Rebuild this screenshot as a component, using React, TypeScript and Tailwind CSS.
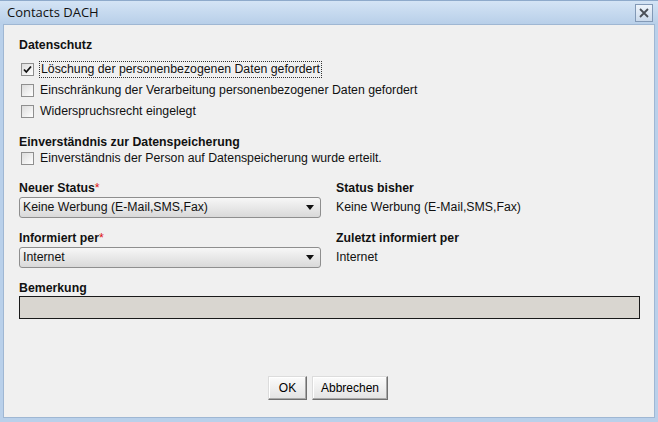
import React from "react";

const sans = { fontFamily: '"Liberation Sans", Arial, sans-serif' };

function CheckBox({ checked = false }: { checked?: boolean }) {
  return (
    <span className="grid h-[13px] w-[13px] shrink-0 place-items-center border border-[#8f8f8f] bg-gradient-to-br from-[#dcdcdc] to-[#ffffff]">
      {checked && (
        <svg width="9" height="9" viewBox="0 0 9 9">
          <path d="M1 4.5 L3.3 7 L8 1.5" fill="none" stroke="#111" strokeWidth="1.8" />
        </svg>
      )}
    </span>
  );
}

function CheckRow({ label, checked, focused }: { label: string; checked?: boolean; focused?: boolean }) {
  return (
    <div className="flex h-[21px] items-center pl-[2px]">
      <CheckBox checked={checked} />
      <span
        className={
          focused
            ? "ml-[5px] border border-dotted border-[#333] px-[1px] leading-[15px]"
            : "ml-[6px] leading-[15px]"
        }
      >
        {label}
      </span>
    </div>
  );
}

function Select({ value }: { value: string }) {
  return (
    <div className="flex h-[21px] w-[302px] items-center justify-between rounded-[3px] border border-[#8e8e8e] bg-gradient-to-b from-[#f7f7f7] to-[#d9d9d9] pl-[3px] pr-[6px]">
      <span>{value}</span>
      <svg width="8" height="5" viewBox="0 0 8 5">
        <path d="M0 0 H8 L4 5 Z" fill="#111" />
      </svg>
    </div>
  );
}

function Button({ children, w }: { children: React.ReactNode; w: string }) {
  return (
    <button
      className={`h-[24px] ${w} border border-t-[#dcdcdc] border-l-[#dcdcdc] border-r-[#6f6f6f] border-b-[#6f6f6f] bg-gradient-to-b from-[#fbfbfb] to-[#e3e3e3] text-[12px] text-black shadow-[inset_-1px_-1px_0_#a8a8a8,inset_1px_1px_0_#ffffff]`}
      style={sans}
    >
      {children}
    </button>
  );
}

export default function App() {
  return (
    <div className="flex h-[422px] w-[658px] flex-col overflow-hidden bg-[#b9d0ea] text-[12.3px] text-[#111]" style={sans}>
      <div className="flex h-[24px] shrink-0 items-center justify-between border-t border-[#8eaacb] bg-gradient-to-b from-[#d4e4f5] to-[#b8cfe9] pl-[7px] pr-[5px]">
        <span className="text-[13px] text-[#111]" style={{ fontFamily: '"Open Sans", "Noto Sans", sans-serif' }}>
          Contacts DACH
        </span>
        <div className="grid h-[18px] w-[18px] place-items-center border border-[#8299b6] bg-gradient-to-b from-[#eef4fb] to-[#cbdaec]">
          <svg width="10" height="10" viewBox="0 0 10 10">
            <path d="M1 1 L9 9 M9 1 L1 9" stroke="#4a4f57" strokeWidth="1.8" />
          </svg>
        </div>
      </div>

      <div className="mb-[4px] ml-[3px] mr-[3px] flex flex-1 flex-col border border-[#9fb7d3] bg-[#f0f0f0] pl-[15px] pr-[15px] pt-[12px]">
        <div className="h-[16px] font-bold leading-[16px]">Datenschutz</div>
        <div className="mt-[6px]">
          <CheckRow label="Löschung der personenbezogenen Daten gefordert" checked focused />
          <CheckRow label="Einschränkung der Verarbeitung personenbezogener Daten gefordert" />
          <CheckRow label="Widerspruchsrecht eingelegt" />
        </div>

        <div className="mt-[12px] h-[16px] font-bold leading-[16px]">Einverständnis zur Datenspeicherung</div>
        <div className="[&>div]:h-[17px]">
          <CheckRow label="Einverständnis der Person auf Datenspeicherung wurde erteilt." />
        </div>

        <div className="mt-[13px] grid grid-cols-[317px_1fr]">
          <div>
            <div className="h-[16px] font-bold leading-[16px]">
              Neuer Status<span className="font-normal text-[#d11]">*</span>
            </div>
            <div className="mt-[1px]">
              <Select value="Keine Werbung (E-Mail,SMS,Fax)" />
            </div>
          </div>
          <div>
            <div className="h-[16px] font-bold leading-[16px]">Status bisher</div>
            <div className="mt-[1px] flex h-[21px] items-center">Keine Werbung (E-Mail,SMS,Fax)</div>
          </div>

          <div className="mt-[12px]">
            <div className="h-[16px] font-bold leading-[16px]">
              Informiert per<span className="font-normal text-[#d11]">*</span>
            </div>
            <div className="mt-[1px]">
              <Select value="Internet" />
            </div>
          </div>
          <div className="mt-[12px]">
            <div className="h-[16px] font-bold leading-[16px]">Zuletzt informiert per</div>
            <div className="mt-[1px] flex h-[21px] items-center">Internet</div>
          </div>
        </div>

        <div className="mt-[12px] h-[16px] font-bold leading-[16px]">Bemerkung</div>
        <div className="h-[23px] w-[621px] border border-[#1a1a1a] bg-[#d9d6d0]" />

        <div className="mt-[57px] flex justify-center gap-[5px] pr-[2px]">
          <Button w="w-[39px]">OK</Button>
          <Button w="w-[76px]">Abbrechen</Button>
        </div>
      </div>
    </div>
  );
}
